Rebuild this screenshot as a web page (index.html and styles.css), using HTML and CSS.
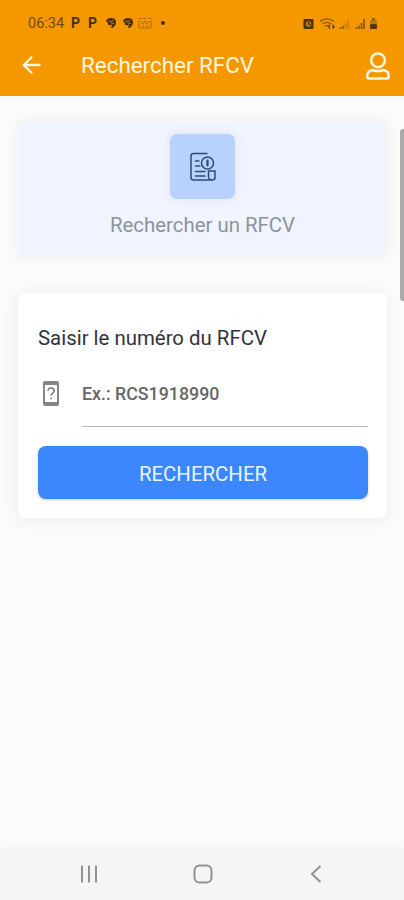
FILE: index.html
```html
<!DOCTYPE html>
<html lang="fr">
<head>
<meta charset="utf-8">
<title>Rechercher RFCV</title>
<link rel="stylesheet" href="styles.css">
</head>
<body>
<header class="top">
  <div class="status">
    <span class="clock">06:34</span>
    <span class="park">P</span>
    <span class="park">P</span>
    <svg class="note" width="12" height="12" viewBox="0 0 12 12"><path d="M1 4C2 0 11 0 11 5c0 4-3 6-5 6l1-3C3 9 2 7 3 6z" fill="#4a3005"/><path d="M4 4l2 1 2-2M6 7l3-1" stroke="#c98008" fill="none"/></svg>
    <svg class="note" width="12" height="12" viewBox="0 0 12 12"><path d="M1 4C2 0 11 0 11 5c0 4-3 6-5 6l1-3C3 9 2 7 3 6z" fill="#4a3005"/><path d="M4 4l2 1 2-2M6 7l3-1" stroke="#c98008" fill="none"/></svg>
    <svg class="mail" width="14" height="12" viewBox="0 0 14 12" fill="none" stroke="#a66a0b"><path d="M.5 1.500h3M5 1.500h3M10 1.500h3.500M1 3v8h12V3M3 4l2 3 2-3 2 3 2-3M4 9h2M8 9h3"/></svg>
    <span class="dot"></span>
    <span class="system">
      <svg width="76" height="14" viewBox="0 0 76 14" fill="none">
        <rect x=".5" y="2" width="10" height="10" rx="1" fill="#4f3204"/><circle cx="5.500" cy="7" r="2.800" fill="#c47b09"/><path d="M5.500 5v2.300h2" stroke="#3c2504"/>
        <path d="M17 4.500c4-3.500 10-3.500 14 0M19.500 7c3-2.200 6-2.200 9 0M22 9.300c1.500-1 2.500-1 4 0" stroke="#8a580a" stroke-width="1.300"/><path d="M26.500 12V8.500l-1.500 1.500M30 7.500V11l1.800-1.500" stroke="#68430a" stroke-width="1.200"/>
        <path d="M37.500 12v-2M40 12V8.500" stroke="#8a580a" stroke-width="1.600"/><path d="M42.500 12V6M45 12V3" stroke="#c77d0b" stroke-width="1.500"/>
        <path d="M53.500 12v-2M56 12V8.500M58.500 12V6M61 12V2" stroke="#805009" stroke-width="1.600"/>
        <rect x="67" y="3" width="7" height="9" rx="1" fill="#bf7909"/><path d="M69 2h3" stroke="#8c5a09" stroke-width="2"/><rect x="67" y="7" width="7" height="5" rx="1" fill="#563705"/>
      </svg>
    </span>
  </div>
  <div class="bar">
    <svg class="back" width="20" height="20" viewBox="0 0 20 20" fill="none" stroke="#fff6dc" stroke-width="2.300"><path d="M18.500 10H2M10 1.800L1.800 10l8.200 8.200"/></svg>
    <h1 class="title">Rechercher RFCV</h1>
    <svg class="user" width="26" height="30" viewBox="0 0 26 30" fill="none" stroke="#fff6dc" stroke-width="2.500"><circle cx="13" cy="9.300" r="6.900"/><path d="M7.500 19C4 19.700 2.200 22 2.200 25.500c0 1.200.7 2 2 2h17.600c1.300 0 2-.8 2-2 0-3.500-1.800-5.800-5.300-6.500-1.700.7-3.500 1.100-5.500 1.100s-3.800-.4-5.500-1.100z"/></svg>
  </div>
</header>
<main class="content">
  <section class="hero">
    <div class="tile">
      <svg width="28" height="32" viewBox="0 0 28 32" fill="none" stroke="#34496d" stroke-width="1.500" stroke-linecap="round"><path d="M18 2.500H4.500c-1.700 0-2.500.8-2.500 2.500v21.500c0 1.700.8 2.500 2.500 2.500H21"/><path d="M6.500 10H10M6.500 15h4.500M6.500 20.500H16M6.500 25H16" stroke-width="1.400"/><circle cx="18.500" cy="12" r="6"/><path d="M18.500 9.500v5" stroke-width="2.200"/><path d="M19.500 20H26v6.500c0 1.700-1 2.500-2.500 2.500S19.500 28 19.500 26z"/></svg>
    </div>
    <p class="caption">Rechercher un RFCV</p>
  </section>
  <form class="card">
    <label class="label" for="rfcv">Saisir le numéro du RFCV</label>
    <div class="field">
      <svg class="device" width="16" height="25" viewBox="0 0 16 25"><rect x="0" y="0" width="16" height="25" rx="2" fill="#858585"/><rect x="2" y="4" width="12" height="17" fill="#fff"/><path d="M5 9.800c0-4 6.200-3.600 6.200 0 0 2.300-3.100 2.400-3.100 5M8.100 16.500v1.700" fill="none" stroke="#777" stroke-width="1.500"/></svg>
      <input class="input" id="rfcv" type="text" placeholder="Ex.: RCS1918990">
    </div>
    <button class="submit" type="button">RECHERCHER</button>
  </form>
  <span class="scroll"></span>
</main>
<nav class="nav">
  <svg width="18" height="18" viewBox="0 0 18 18" stroke="#929292" stroke-width="2"><path d="M2 .5v17M9 .5v17M16 .5v17"/></svg>
  <svg class="home" width="20" height="20" viewBox="0 0 20 20" fill="none" stroke="#929292" stroke-width="2"><rect x="1.500" y="1.500" width="17" height="17" rx="5"/></svg>
  <svg width="12" height="18" viewBox="0 0 12 18" fill="none" stroke="#929292" stroke-width="2"><path d="M10.500 1L2 9l8.500 8"/></svg>
</nav>
</body>
</html>
```
FILE: styles.css
```css
* { box-sizing: border-box; }
body {
  margin: 0;
  height: 900px;
  display: flex;
  flex-direction: column;
  overflow: hidden;
  background: #fbfbfb;
  font-family: Roboto, "Liberation Sans", sans-serif;
}
.top { position: relative; z-index: 1; height: 96px; background: #f59800; flex: none; }
.status {
  height: 46px;
  padding: 0 25px 0 28px;
  display: flex;
  align-items: center;
  color: #4a3005;
}
.clock { width: 43px; font-size: 14.5px; color: #72490a; }
.park { width: 17px; font-size: 14px; font-weight: 700; }
.note { margin-right: 5px; }
.mail { margin-right: 9px; margin-left: -1px; }
.dot { width: 4px; height: 4px; border-radius: 50%; background: #4a3005; }
.system { margin-left: auto; height: 14px; }
.bar {
  height: 40px;
  padding: 0 13px 0 22px;
  display: flex;
  align-items: center;
}
.back { flex: none; margin-top: -2px; }
.title {
  flex: 1;
  margin: -2px 0 0 39px;
  font-size: 22.4px;
  font-weight: 400;
  color: #fff6dc;
}
.content { position: relative; flex: 1; padding: 122px 17px 0 18px; margin-top: -96px; }
.hero {
  height: 134px;
  padding-top: 12px;
  display: flex;
  flex-direction: column;
  align-items: center;
  background: #f0f4fe;
  box-shadow: 0 0 10px 3px #f3f3f1;
}
.tile {
  width: 65px;
  height: 65px;
  display: flex;
  align-items: center;
  justify-content: center;
  border-radius: 7px;
  background: #b9d1ff;
  box-shadow: 0 0 9px #dce3ef;
}
.caption {
  margin: 13px 0 0;
  font-size: 20.4px;
  line-height: 26px;
  color: #8e929b;
  white-space: nowrap;
}
.card {
  height: 225px;
  margin-top: 37px;
  padding: 32px 19px 0 20px;
  border-radius: 8px;
  background: #fff;
  box-shadow: 0 2px 14px 3px #f0f0f0;
}
.label { display: block; font-size: 20.4px; line-height: 26px; color: #32323a; }
.field {
  height: 76px;
  display: flex;
  align-items: flex-start;
  padding: 20px 0 0 5px;
}
.device { margin-top: 10px; flex: none; }
.input {
  flex: 1;
  min-width: 0;
  height: 56px;
  margin-left: 23px;
  padding: 0 0 11px;
  border: 0;
  border-bottom: 1px solid #b4b4b4;
  background: none;
  font-family: inherit;
  font-size: 17.8px;
  font-weight: 500;
  outline: 0;
}
.input::placeholder { color: #666; opacity: 1; }
.submit {
  display: block;
  width: 100%;
  height: 53px;
  margin-top: 19px;
  padding: 3px 0 0;
  border: 0;
  border-radius: 8px;
  background: #3c87fd;
  box-shadow: 0 1px 3px #c8cbd2;
  color: #e8f5ff;
  font-family: inherit;
  font-size: 20.4px;
}
.scroll {
  position: absolute;
  top: 129px;
  right: 0;
  width: 4px;
  height: 172px;
  border-radius: 3px 0 0 3px;
  background: #aaa;
}
.nav {
  height: 52px;
  flex: none;
  padding: 0 82px 0 80px;
  display: flex;
  align-items: center;
  justify-content: space-between;
  background: #f5f5f5;
  box-shadow: 0 -3px 6px #f7f7f7;
}
.home { margin-right: 3px; }
```
